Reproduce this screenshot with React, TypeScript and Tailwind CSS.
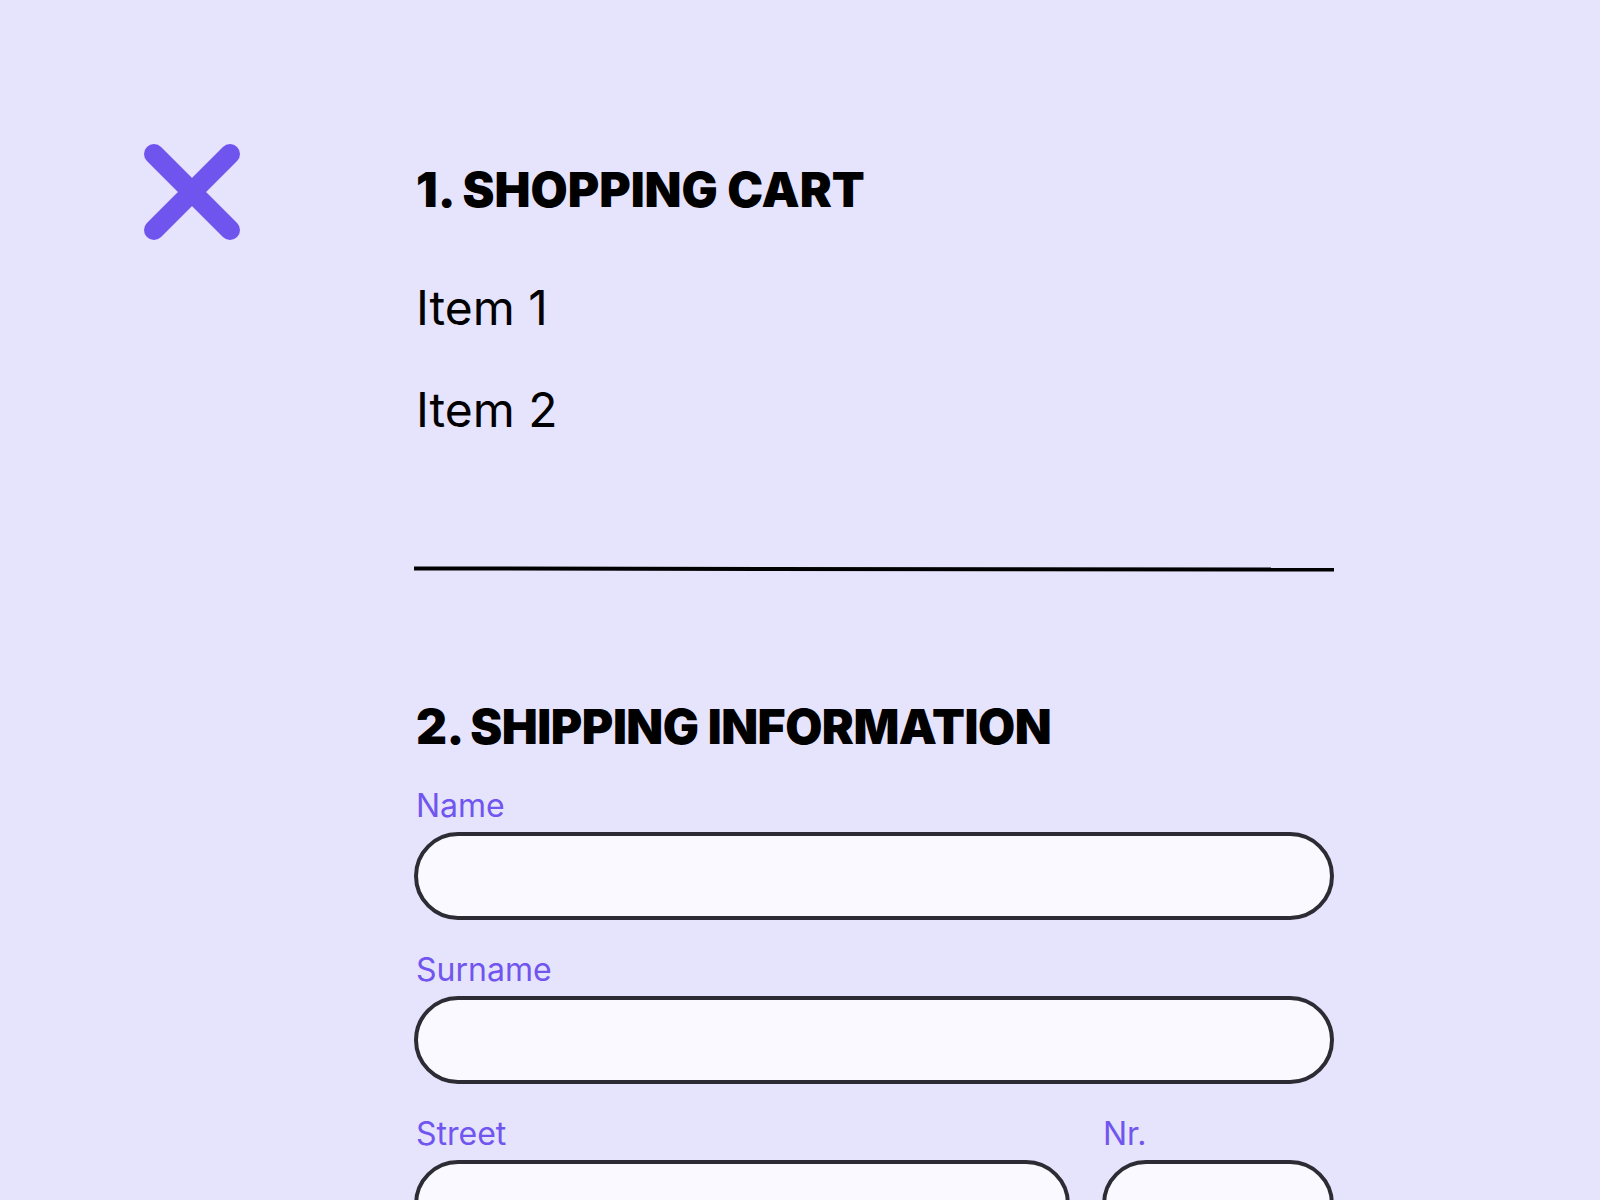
export default function App() {
  return (
    <div
      className="min-h-screen w-full bg-[#e6e3fc] flex items-start pt-[144px] pl-[144px]"
      style={{ fontFamily: "Inter, 'Liberation Sans', sans-serif" }}
    >
      {/* Close */}
      <button className="w-[96px] h-[96px] shrink-0" title="Close">
        <svg viewBox="0 0 96 96" className="w-[96px] h-[96px]" fill="none">
          <path
            d="M10 10 86 86M86 10 10 86"
            stroke="#7054ee"
            strokeWidth="20"
            strokeLinecap="round"
          />
        </svg>
      </button>

      {/* Checkout */}
      <div className="ml-[174px] w-[920px] pt-[22px] flex flex-col">
        <h1 className="pl-[2px] text-[48px] leading-[48px] font-black tracking-normal text-black">
          1. SHOPPING CART
        </h1>
        <div className="pl-[2px] mt-[70px] text-[48px] leading-[48px] text-black">Item 1</div>
        <div className="pl-[2px] mt-[54px] text-[48px] leading-[48px] text-black">Item 2</div>

        <div className="mt-[133px] h-[4px] bg-black rotate-[0.06deg]" />

        <h2 className="pl-[2px] mt-[132px] text-[48px] leading-[48px] font-black tracking-[-0.01em] text-black">
          2. SHIPPING INFORMATION
        </h2>

        <label className="pl-[2px] mt-[39px] text-[32px] leading-[32px] text-[#7055ef]">Name</label>
        <input className="mt-[10px] h-[88px] w-full rounded-full border-[4px] border-[#2d2b33] bg-[#f9f9ff] px-8 text-[28px] outline-none" />

        <label className="pl-[2px] mt-[34px] text-[32px] leading-[32px] text-[#7055ef]">Surname</label>
        <input className="mt-[10px] h-[88px] w-full rounded-full border-[4px] border-[#2d2b33] bg-[#f9f9ff] px-8 text-[28px] outline-none" />

        <div className="mt-[34px] flex gap-[32px]">
          <div className="flex-1 flex flex-col">
            <label className="pl-[2px] text-[32px] leading-[32px] text-[#7055ef]">Street</label>
            <input className="mt-[10px] h-[88px] w-full rounded-full border-[4px] border-[#2d2b33] bg-[#f9f9ff] px-8 text-[28px] outline-none" />
          </div>
          <div className="w-[232px] flex flex-col">
            <label className="pl-[1px] text-[32px] leading-[32px] text-[#7055ef]">Nr.</label>
            <input className="mt-[10px] h-[88px] w-full rounded-full border-[4px] border-[#2d2b33] bg-[#f9f9ff] px-8 text-[28px] outline-none" />
          </div>
        </div>
      </div>
    </div>
  )
}
